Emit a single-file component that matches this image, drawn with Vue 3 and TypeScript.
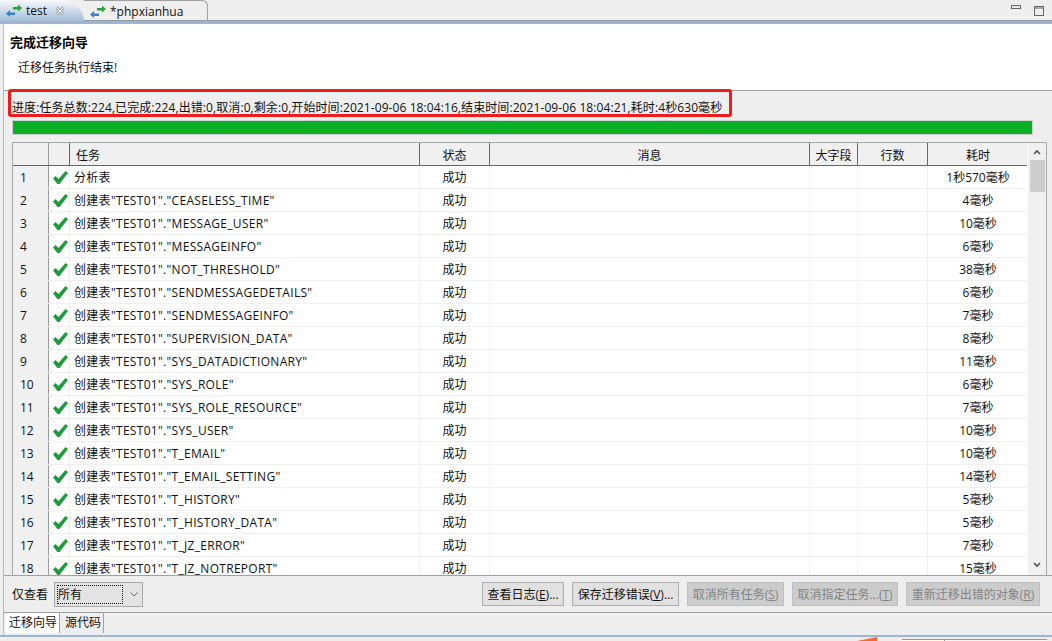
<script setup lang="ts">
const names: string[] = ['分析表','CEASELESS_TIME','MESSAGE_USER','MESSAGEINFO','NOT_THRESHOLD','SENDMESSAGEDETAILS','SENDMESSAGEINFO','SUPERVISION_DATA','SYS_DATADICTIONARY','SYS_ROLE','SYS_ROLE_RESOURCE','SYS_USER','T_EMAIL','T_EMAIL_SETTING','T_HISTORY','T_HISTORY_DATA','T_JZ_ERROR','T_JZ_NOTREPORT']
const times: string[] = ['1秒570毫秒','4毫秒','10毫秒','6毫秒','38毫秒','6毫秒','7毫秒','8毫秒','11毫秒','6毫秒','7毫秒','10毫秒','10毫秒','14毫秒','5毫秒','5毫秒','7毫秒','15毫秒']
const rows = names.map((n, i) => ({ no: i + 1, task: i === 0 ? n : `创建表"TEST01"."${n}"`, time: times[i] }))
</script>

<template>
  <div class="app">
    <div class="tabbar">
      <div class="tab active">
        <svg class="arrows" viewBox="0 0 16 13" width="16" height="13"><path d="M7 3h5V0.500L16 4l-4 3.500V5.500H7z" fill="#2e9e3f"/><path d="M9 8.500H4V6L0 9.500 4 13v-2h5z" fill="#2f82d8"/></svg>
        <span>test</span>
        <svg class="close" viewBox="0 0 10 10" width="10" height="10"><path d="M1.500 1.500l7 7M8.500 1.500l-7 7" stroke="#7d838a" stroke-width="2.600" fill="none"/><path d="M1.500 1.500l7 7M8.500 1.500l-7 7" stroke="#f6f8fa" stroke-width="1.200" fill="none"/></svg>
      </div>
      <div class="tab">
        <svg class="arrows" viewBox="0 0 16 13" width="16" height="13"><path d="M7 3h5V0.500L16 4l-4 3.500V5.500H7z" fill="#2e9e3f"/><path d="M9 8.500H4V6L0 9.500 4 13v-2h5z" fill="#2f82d8"/></svg>
        <span>*phpxianhua</span>
      </div>
      <div class="spacer"></div>
      <svg class="win min" viewBox="0 0 10 4" width="10" height="4"><rect x="0.500" y="0.500" width="9" height="3" fill="none" stroke="#666"/></svg>
      <svg class="win max" viewBox="0 0 10 10" width="10" height="10"><rect x="0.500" y="0.500" width="9" height="9" fill="none" stroke="#666"/><path d="M0 2h10" stroke="#666"/></svg>
    </div>
    <div class="body">
      <header class="wizard-head">
        <h1>完成迁移向导</h1>
        <p>迁移任务执行结束!</p>
      </header>
      <div class="progress-text">进度:任务总数:224,已完成:224,出错:0,取消:0,剩余:0,开始时间:2021-09-06 18:04:16,结束时间:2021-09-06 18:04:21,耗时:4秒630毫秒</div>
      <div class="highlight"></div>
      <div class="bar"></div>
      <div class="grid">
        <div class="scroller">
          <div class="row head">
            <div class="c no"></div><div class="c ic"></div><div class="c task">任务</div><div class="c st">状态</div><div class="c msg">消息</div><div class="c big">大字段</div><div class="c lines">行数</div><div class="c time">耗时</div>
          </div>
          <div v-for="r in rows" :key="r.no" class="row">
            <div class="c no">{{ r.no }}</div>
            <div class="c ic"><svg viewBox="0 0 15 13" width="15" height="13"><path d="M0 7.500L2.500 5l3 3L12.500 0 15 2 6.500 13h-2z" fill="#1f9a3c"/></svg></div>
            <div class="c task">{{ r.task }}</div>
            <div class="c st">成功</div>
            <div class="c msg"></div><div class="c big"></div><div class="c lines"></div>
            <div class="c time">{{ r.time }}</div>
          </div>
        </div>
        <div class="scrollbar">
          <svg class="sb-arrow" viewBox="0 0 8 6" width="8" height="6"><path d="M1 5l3-3 3 3" stroke="#505050" stroke-width="1.600" fill="none"/></svg>
          <div class="thumb"></div>
          <div class="sb-fill"></div>
          <svg class="sb-arrow" viewBox="0 0 8 6" width="8" height="6"><path d="M1 1l3 3 3-3" stroke="#505050" stroke-width="1.600" fill="none"/></svg>
        </div>
      </div>
      <div class="toolbar">
        <span class="lbl">仅查看</span>
        <div class="combo">
          <span class="focus">所有</span>
          <svg viewBox="0 0 8 5" width="8" height="5"><path d="M0.500 0.500L4 4l3.500-3.500" stroke="#666" fill="none"/></svg>
        </div>
        <div class="spacer"></div>
        <button class="btn w1">查看日志(<u>E</u>)...</button>
        <button class="btn w2">保存迁移错误(<u>V</u>)...</button>
        <button class="btn w3" disabled>取消所有任务(<u>S</u>)</button>
        <button class="btn w4" disabled>取消指定任务...(<u>T</u>)</button>
        <button class="btn w5" disabled>重新迁移出错的对象(<u>R</u>)</button>
      </div>
      <div class="bottom-tabs">
        <div class="btab on">迁移向导</div>
        <div class="btab">源代码</div>
      </div>
    </div>
    <div class="footer">
      <div class="orange"></div>
      <div class="mini"><div class="mini-y"></div></div>
    </div>
  </div>
</template>

<style scoped>
.app { width: 1052px; height: 641px; position: relative; overflow: hidden; background: #eeeeee; font-family: "Open Sans", "Noto Sans CJK SC", sans-serif; font-size: 12px; color: #111; display: flex; flex-direction: column; }
.tabbar { height: 21px; flex: none; display: flex; align-items: center; background: #eeeeee; border-bottom: 3px solid #9cb6d2; box-shadow: inset 0 -1px 0 #9a9a9a; box-sizing: content-box; }
.spacer { flex: 1; }
.tab { height: 21px; display: flex; align-items: center; gap: 4px; padding-left: 6px; box-sizing: border-box; font-size: 12px; }
.tab.active { width: 84px; background: linear-gradient(#f6f8fb, #a5bedb); border-top-right-radius: 22px 21px; }
.tab:not(.active) { width: 124px; border-right: 1px solid #a0a0a0; border-top: 1px solid #a0a0a0; border-top-right-radius: 6px; }
.close { margin-left: 4px; }
.min { margin: 0 13px 8px 0; }
.max { margin-right: 8px; }
.body { flex: none; margin-left: 3px; border-left: 1px solid #a9bfd6; background: #eeeeee; display: flex; flex-direction: column; position: relative; box-sizing: border-box; height: 611px; }
.wizard-head { height: 67px; flex: none; background: #fff; padding: 9px 0 0 6px; box-sizing: border-box; border-bottom: 1px solid #a0a0a0; }
.wizard-head h1 { margin: 0; font-size: 13px; font-weight: 700; line-height: 18px; color: #000; }
.wizard-head p { margin: 8px 0 0 8px; line-height: 18px; color: #111; }
.progress-text { height: 29px; flex: none; line-height: 33px; padding-left: 8px; white-space: nowrap; letter-spacing: 0.09px; box-sizing: border-box; }
.highlight { position: absolute; left: 4px; top: 65px; width: 718px; height: 22px; border: 3px solid #ee1c1c; border-radius: 3px; }
.bar { height: 15px; flex: none; margin: 0 19px 0 8px; background: #0cae2a; border: 1px solid #d0d0d0; box-sizing: border-box; }
.grid { height: 433px; flex: none; margin: 7px 5px 0 8px; border: 1px solid #a8a8a8; border-bottom: none; background: #fff; display: flex; overflow: hidden; box-sizing: border-box; }
.scroller { flex: 1; overflow: hidden; }
.row { display: flex; height: 23px; border-bottom: 1px solid #f0f0f0; box-sizing: border-box; background: #fff; }
.row.head { background: #f0f0f0; border-bottom: 1px solid #666; }
.c { flex: none; line-height: 24px; box-sizing: border-box; border-right: 1px solid #f0f0f0; white-space: nowrap; overflow: hidden; }
.row.head .c { border-right: 1px solid #666; text-align: center; line-height: 25px; }
.no { width: 36px; background: #f0f0f0; padding-left: 7px; border-right-color: #999 !important; }
.ic { width: 21px; display: flex; align-items: center; justify-content: center; padding-left: 2px; }
.task { width: 350px; padding-left: 4px; letter-spacing: 0.3px; }
.row.head .task { text-align: left; padding-left: 6px; letter-spacing: 0; }
.st { width: 70px; text-align: center; }
.msg { width: 320px; }
.big { width: 48px; }
.lines { width: 70px; }
.time { width: 100px; text-align: center; border-right: none !important; }
.scrollbar { width: 18px; flex: none; background: #f0f0f0; display: flex; flex-direction: column; align-items: center; margin-left: 1px; padding-top: 6px; box-sizing: border-box; }
.sb-arrow { flex: none; }
.thumb { width: 15px; height: 32px; flex: none; background: #cdcdcd; margin-top: 5px; }
.sb-fill { flex: 1; }
.scrollbar .sb-arrow:last-child { margin-bottom: 7px; }
.toolbar { height: 38px; flex: none; display: flex; align-items: center; border-top: 1px solid #a0a0a0; border-bottom: 1px solid #a0a0a0; padding: 0 12px 0 8px; box-sizing: border-box; }
.lbl { margin-right: 6px; }
.combo { width: 89px; height: 25px; border: 1px solid #a8a8a8; background: #e3e3e3; display: flex; align-items: center; gap: 7px; padding: 2px; box-sizing: border-box; }
.focus { width: 66px; height: 19px; line-height: 17px; border: 1px dotted #111; box-sizing: border-box; }
.btn { height: 24px; padding: 0; margin-left: 8px; font: inherit; color: #111; background: #e1e1e1; border: 1px solid #adadad; box-sizing: border-box; white-space: nowrap; }
.btn:disabled { color: #838383; background: #cccccc; border-color: #bfbfbf; }
.w1 { width: 82px; }
.w2 { width: 107px; }
.w3 { width: 97px; }
.w4 { width: 106px; }
.w5 { width: 134px; }
.bottom-tabs { height: 22px; flex: none; display: flex; margin-left: 1px; background: #eeeeee; }
.btab { height: 20px; line-height: 20px; padding: 0 0 0 4px; border-right: 1px solid #a0a0a0; box-sizing: border-box; }
.btab.on { width: 55px; background: #fff; }
.btab:not(.on) { width: 44px; padding-left: 5px; }
.footer { height: 6px; flex: none; border-top: 2px solid #9cb6d2; box-sizing: border-box; position: relative; }
.orange { position: absolute; left: 857px; top: 0; width: 20px; height: 4px; background: #f26a2e; clip-path: polygon(0 100%, 100% 0, 100% 100%); }
.mini { position: absolute; left: 902px; top: 2px; width: 145px; height: 2px; background: #f4f4f4; border-top: 1px solid #999; }
.mini-y { width: 42px; height: 2px; background: #fdfbe8; border-right: 1px solid #999; }
</style>
